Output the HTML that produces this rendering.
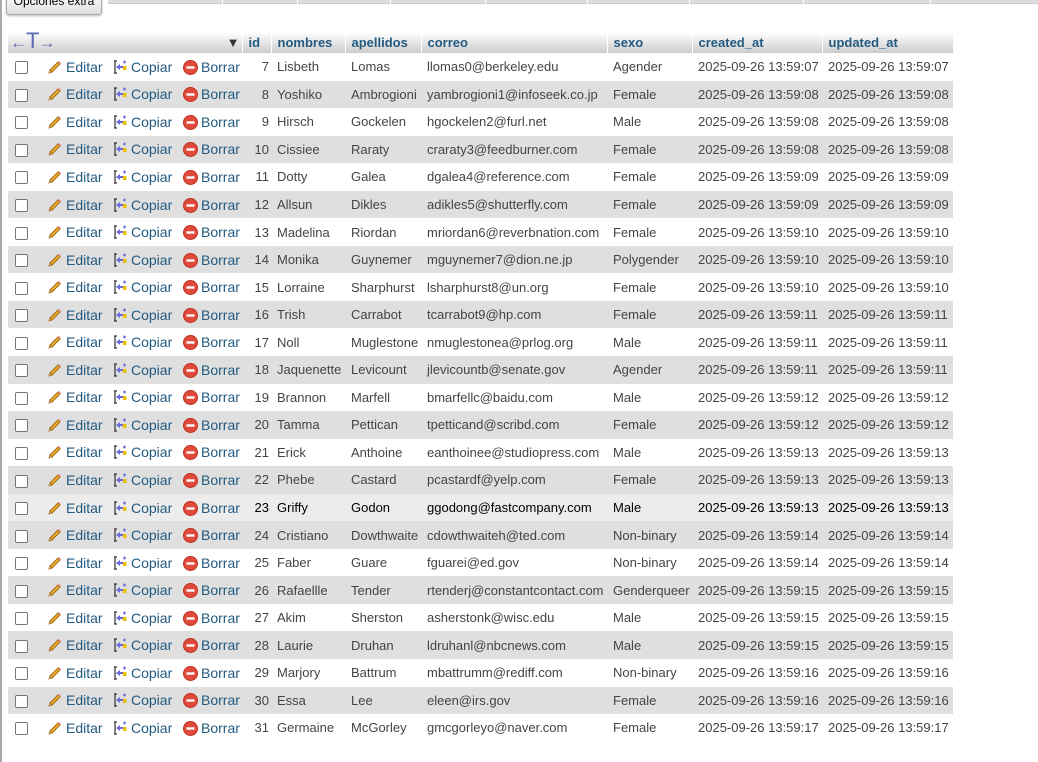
<!DOCTYPE html>
<html><head><meta charset="utf-8"><style>
body{margin:0;width:1038px;height:762px;overflow:hidden;background:#fff;font-family:"Liberation Sans",Arial,sans-serif;font-size:13px;color:#444;position:relative}
.lb{position:absolute;left:0;top:0;width:2px;height:762px;background:#aaa}
.tabs{position:absolute;left:108px;top:0;width:930px;height:3px;background:#ddd;border-bottom:1px solid #ccc}
.tabs i{position:absolute;top:0;width:1px;height:4px;background:#fff}
.btn{position:absolute;left:6px;top:-8px;width:94px;height:21px;background:linear-gradient(#fff,#ddd);border:1px solid #aaa;border-radius:3px;box-shadow:0 1px 2px #bbb;font-size:12px;color:#000;text-align:center;line-height:16px;overflow:hidden}
table{position:absolute;left:8px;top:32px;border-collapse:collapse;table-layout:fixed}
th{height:21px;background:linear-gradient(#fff,#ccc);color:#235a81;font-weight:bold;text-align:left;padding:0 0 0 6px;border-right:1px solid #fff;white-space:nowrap}
td{height:27.56px;padding:0 0 0 6px;white-space:nowrap;overflow:hidden;box-sizing:border-box}
tr.e td{background:#dfdfdf}
tr.h td{background:#ececec;color:#000}
td.n{text-align:right;padding:0 2px 0 0}
a{color:#235a81;text-decoration:none;font-size:14px}
.cb{display:inline-block;width:11px;height:11px;border:1px solid #767676;border-radius:2px;background:#fff;vertical-align:middle;margin-left:1px}
svg{vertical-align:-3px;margin-right:3px}
td.a1{padding-left:11px}td.a2,td.a3{padding-left:8px}
</style></head><body>
<div class="lb"></div>
<div class="tabs"><i style="left:114px"></i><i style="left:189px"></i><i style="left:282px"></i><i style="left:377px"></i><i style="left:479px"></i><i style="left:581px"></i><i style="left:695px"></i><i style="left:822px"></i></div>
<div class="btn">Opciones extra</div>
<table>
<colgroup><col style="width:28px"><col style="width:69px"><col style="width:70px"><col style="width:67px"><col style="width:29px"><col style="width:74px"><col style="width:76px"><col style="width:186px"><col style="width:85px"><col style="width:130px"><col style="width:131px"></colgroup>
<tr><th colspan="4" style="padding:0 2px 0 2px"><span style="color:#5b6cb0;font-weight:normal;font-size:17px;letter-spacing:-1px">←<span style="font-size:22px;line-height:18px">T</span>→</span><span style="float:right;font-size:13px;color:#333;margin-top:3px">▼</span></th><th>id</th><th>nombres</th><th>apellidos</th><th>correo</th><th>sexo</th><th>created_at</th><th>updated_at</th></tr>
</table>
<script>
var d=[[7,"Lisbeth","Lomas","llomas0@berkeley.edu","Agender","07"],[8,"Yoshiko","Ambrogioni","yambrogioni1@infoseek.co.jp","Female","08"],[9,"Hirsch","Gockelen","hgockelen2@furl.net","Male","08"],[10,"Cissiee","Raraty","craraty3@feedburner.com","Female","08"],[11,"Dotty","Galea","dgalea4@reference.com","Female","09"],[12,"Allsun","Dikles","adikles5@shutterfly.com","Female","09"],[13,"Madelina","Riordan","mriordan6@reverbnation.com","Female","10"],[14,"Monika","Guynemer","mguynemer7@dion.ne.jp","Polygender","10"],[15,"Lorraine","Sharphurst","lsharphurst8@un.org","Female","10"],[16,"Trish","Carrabot","tcarrabot9@hp.com","Female","11"],[17,"Noll","Muglestone","nmuglestonea@prlog.org","Male","11"],[18,"Jaquenette","Levicount","jlevicountb@senate.gov","Agender","11"],[19,"Brannon","Marfell","bmarfellc@baidu.com","Male","12"],[20,"Tamma","Pettican","tpetticand@scribd.com","Female","12"],[21,"Erick","Anthoine","eanthoinee@studiopress.com","Male","13"],[22,"Phebe","Castard","pcastardf@yelp.com","Female","13"],[23,"Griffy","Godon","ggodong@fastcompany.com","Male","13"],[24,"Cristiano","Dowthwaite","cdowthwaiteh@ted.com","Non-binary","14"],[25,"Faber","Guare","fguarei@ed.gov","Non-binary","14"],[26,"Rafaellle","Tender","rtenderj@constantcontact.com","Genderqueer","15"],[27,"Akim","Sherston","asherstonk@wisc.edu","Male","15"],[28,"Laurie","Druhan","ldruhanl@nbcnews.com","Male","15"],[29,"Marjory","Battrum","mbattrumm@rediff.com","Non-binary","16"],[30,"Essa","Lee","eleen@irs.gov","Female","16"],[31,"Germaine","McGorley","gmcgorleyo@naver.com","Female","17"]];
var pen='<svg width="16" height="16" viewBox="0 0 16 16"><path d="M3 11L11 3l2 2-8 8z" fill="#f0b030" stroke="#a06a10" stroke-width="1"/><path d="M3 11l-1 3 3-1z" fill="#f3d9a0" stroke="#a06a10" stroke-width=".8"/><path d="M11 3l1-1 2 2-1 1z" fill="#e88"/></svg>';
var cp='<svg width="15" height="16" viewBox="0 0 15 16"><path d="M1 2h3M1 14h3M2 2v12" stroke="#333" stroke-width="1.2" fill="none"/><path d="M3 8l4-3v2h3v2H7v2z" fill="#6a6ad8"/><rect x="10" y="7" width="3.5" height="4" fill="#e8c000"/><path d="M10 3h3M11.5 1.5v3" stroke="#6a6ad8" stroke-width="1.2"/></svg>';
var br='<svg width="15" height="15" viewBox="0 0 15 15"><circle cx="7.5" cy="7.5" r="7" fill="#e04a3a" stroke="#c03020"/><rect x="3.5" y="6.3" width="8" height="2.4" fill="#fff"/></svg>';
var t=document.querySelector('table'),h='';
d.forEach(function(r,i){var c=r[0]==23?'h':(i%2?'e':'');var ts='2025-09-26 13:59:'+r[5];
h+='<tr class="'+c+'"><td><span class="cb"></span></td><td class="a1">'+pen+'<a>Editar</a></td><td class="a2">'+cp+'<a>Copiar</a></td><td class="a3">'+br+'<a>Borrar</a></td><td class="n">'+r[0]+'</td><td>'+r[1]+'</td><td>'+r[2]+'</td><td>'+r[3]+'</td><td>'+r[4]+'</td><td>'+ts+'</td><td>'+ts+'</td></tr>';});
t.insertAdjacentHTML('beforeend',h);
</script>
</body></html>
